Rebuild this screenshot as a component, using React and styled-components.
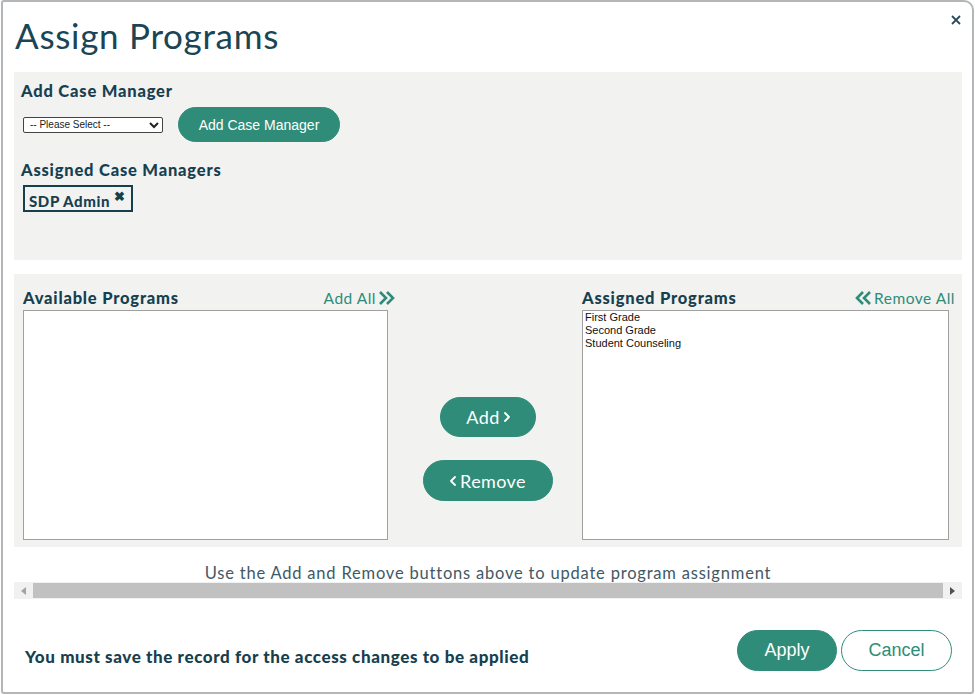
import styled, { createGlobalStyle } from "styled-components";

const GlobalStyle = createGlobalStyle`
  html, body {
    margin: 0;
    padding: 0;
    background: #ffffff;
  }
  body {
    font-family: Lato, "Noto Sans", sans-serif;
    color: #17404f;
  }
`;

const TEAL = "#2e8c79";
const INK = "#17404f";

const Dialog = styled.div`
  box-sizing: border-box;
  width: 973px;
  height: 694px;
  margin: 0 0 0 1px;
  border: 2px solid #b3b6b8;
  border-radius: 3px 10px 3px 3px;
  background: #ffffff;
  display: flex;
  flex-direction: column;
  padding: 0 10px 0 11px;
  position: relative;
`;

const Header = styled.div`
  display: flex;
  align-items: flex-start;
  justify-content: space-between;
  height: 70px;
`;

const Title = styled.h1`
  margin: 12px 0 0 1px;
  font-family: Lato, sans-serif;
  font-weight: 400;
  font-size: 35px;
  letter-spacing: 0.7px;
  color: #1b4454;
`;

const Close = styled.button`
  position: absolute;
  top: 10px;
  right: 8px;
  border: none;
  background: none;
  padding: 0;
  width: 16px;
  height: 16px;
  cursor: pointer;
  color: #2a4c5a;
`;

const Panel = styled.section`
  background: #f2f2f1;
  padding: ${(p) => p.$pad};
  height: ${(p) => p.$height};
  box-sizing: border-box;
`;

const Label = styled.h3`
  margin: 0;
  font-family: Lato, sans-serif;
  font-weight: 900;
  font-size: 16.5px;
  letter-spacing: 0.8px;
  line-height: 20px;
  color: ${INK};
`;

const Row = styled.div`
  display: flex;
  align-items: center;
  gap: 15px;
  margin: 6px 0 18px 2px;
`;

const Select = styled.select`
  width: 140px;
  height: 16px;
  font-family: "Liberation Sans", Arial, sans-serif;
  font-size: 10px;
  padding: 0 2px;
  border: 1px solid #444;
  border-radius: 2px;
  background: #fff;
  color: #222;
`;

const Pill = styled.button`
  font-family: ${(p) => (p.$geo ? "Lato, sans-serif" : '"Liberation Sans", Arial, sans-serif')};
  letter-spacing: ${(p) => (p.$geo ? "0.4px" : "0")};
  background: ${(p) => (p.$outline ? "#ffffff" : TEAL)};
  color: ${(p) => (p.$outline ? TEAL : "#ffffff")};
  border: 1.5px solid ${TEAL};
  border-radius: 22px;
  height: ${(p) => p.$h || 35}px;
  width: ${(p) => p.$w}px;
  font-size: ${(p) => p.$size || 14}px;
  padding: 0;
  display: inline-flex;
  align-items: center;
  justify-content: center;
  gap: 4px;
  cursor: pointer;
`;

const Chip = styled.div`
  display: inline-flex;
  align-items: flex-start;
  gap: 4px;
  margin: 5px 0 0 2px;
  padding: 5px 5px 4px 4px;
  border: 2px solid ${INK};
  font-family: Lato, sans-serif;
  font-weight: 900;
  font-size: 15px;
  letter-spacing: 0.6px;
  color: ${INK};
  height: 27px;
  box-sizing: border-box;
`;

const ChipX = styled.span`
  font-size: 13px;
  line-height: 8px;
`;

const Gap = styled.div`
  height: 14px;
`;

const Columns = styled.div`
  display: grid;
  grid-template-columns: 365px 1fr 367px;
  height: 100%;
`;

const Column = styled.div`
  display: flex;
  flex-direction: column;
`;

const ColHead = styled.div`
  display: flex;
  align-items: center;
  justify-content: space-between;
  height: 20px;
  margin-bottom: 2px;
`;

const Link = styled.a`
  display: inline-flex;
  align-items: center;
  gap: 2px;
  font-family: Lato, sans-serif;
  font-size: 15.5px;
  letter-spacing: 0.5px;
  color: ${TEAL};
  cursor: pointer;
  margin-right: ${(p) => p.$mr || 0}px;
`;

const ListBox = styled.div`
  height: 230px;
  background: #ffffff;
  border: 1px solid #a0a0a0;
  box-sizing: border-box;
  padding: 0 2px;
  font-family: "Liberation Sans", Arial, sans-serif;
  font-size: 11px;
  line-height: 13px;
  color: #111;
`;

const Middle = styled.div`
  display: flex;
  flex-direction: column;
  align-items: center;
  gap: 23px;
  padding: 109px 0 0 6px;
`;

const Hint = styled.p`
  margin: 16px 0 0;
  text-align: center;
  font-family: Lato, sans-serif;
  font-size: 16.5px;
  letter-spacing: 0.8px;
  color: #3f5966;
  height: 19px;
`;

const Scrollbar = styled.div`
  display: flex;
  align-items: center;
  height: 17px;
  background: #f1f1f1;
`;

const Arrow = styled.span`
  width: 19px;
  display: flex;
  justify-content: center;
  align-items: center;
`;

const Thumb = styled.div`
  flex: 1;
  height: 15px;
  background: #c1c1c1;
`;

const Footer = styled.footer`
  display: flex;
  align-items: center;
  justify-content: space-between;
  margin-top: 31px;
  padding: 0 10px 0 11px;
`;

const Warning = styled.p`
  margin: 12px 0 0;
  font-family: Lato, sans-serif;
  font-weight: 900;
  font-size: 17px;
  letter-spacing: 0.6px;
  color: ${INK};
`;

const Actions = styled.div`
  display: flex;
  gap: 4px;
`;

const Chevron = ({ dir = "right", size = 10 }) => (
  <svg width={size * 0.6} height={size} viewBox="0 0 6 10" fill="none">
    <path
      d={dir === "right" ? "M1 1l4 4-4 4" : "M5 1L1 5l4 4"}
      stroke="currentColor"
      strokeWidth="1.8"
      strokeLinecap="round"
      strokeLinejoin="round"
    />
  </svg>
);

const DoubleChevron = ({ dir = "right" }) => (
  <svg width="18" height="16" viewBox="0 0 18 16" fill="none">
    <path
      d={
        dir === "right"
          ? "M2 2l6 6-6 6M9 2l6 6-6 6"
          : "M16 2l-6 6 6 6M9 2L3 8l6 6"
      }
      stroke={TEAL}
      strokeWidth="2.6"
    />
  </svg>
);

const programs = ["First Grade", "Second Grade", "Student Counseling"];

export default function App() {
  return (
    <>
      <GlobalStyle />
      <Dialog>
        <Header>
          <Title>Assign Programs</Title>
          <Close aria-label="Close">
            <svg width="10" height="10" viewBox="0 0 10 10">
              <path d="M1 1l8 8M9 1L1 9" stroke="currentColor" strokeWidth="1.8" />
            </svg>
          </Close>
        </Header>

        <Panel $pad="9px 0 0 7px" $height="188px">
          <Label>Add Case Manager</Label>
          <Row>
            <Select defaultValue="">
              <option value="">-- Please Select --</option>
            </Select>
            <Pill $w={162}>Add Case Manager</Pill>
          </Row>
          <Label>Assigned Case Managers</Label>
          <Chip>
            SDP Admin <ChipX>✖</ChipX>
          </Chip>
        </Panel>

        <Gap />

        <Panel $pad="14px 13px 7px 9px" $height="273px">
          <Columns>
            <Column>
              <ColHead>
                <Label>Available Programs</Label>
                <Link $mr={-8}>
                  Add All <DoubleChevron dir="right" />
                </Link>
              </ColHead>
              <ListBox />
            </Column>
            <Middle>
              <Pill $w={96} $h={40} $size={18} $geo>
                Add <Chevron dir="right" />
              </Pill>
              <Pill $w={130} $h={41} $size={18} $geo>
                <Chevron dir="left" /> Remove
              </Pill>
            </Middle>
            <Column>
              <ColHead>
                <Label>Assigned Programs</Label>
                <Link $mr={-6}>
                  <DoubleChevron dir="left" /> Remove All
                </Link>
              </ColHead>
              <ListBox>
                {programs.map((p) => (
                  <div key={p}>{p}</div>
                ))}
              </ListBox>
            </Column>
          </Columns>
        </Panel>

        <Hint>Use the Add and Remove buttons above to update program assignment</Hint>

        <Scrollbar>
          <Arrow>
            <svg width="5" height="8" viewBox="0 0 5 8">
              <path d="M5 0v8L0 4z" fill="#a3a3a3" />
            </svg>
          </Arrow>
          <Thumb />
          <Arrow>
            <svg width="5" height="8" viewBox="0 0 5 8">
              <path d="M0 0v8l5-4z" fill="#505050" />
            </svg>
          </Arrow>
        </Scrollbar>

        <Footer>
          <Warning>You must save the record for the access changes to be applied</Warning>
          <Actions>
            <Pill $w={100} $h={41} $size={18}>Apply</Pill>
            <Pill $w={111} $h={41} $size={18} $outline>
              Cancel
            </Pill>
          </Actions>
        </Footer>
      </Dialog>
    </>
  );
}
